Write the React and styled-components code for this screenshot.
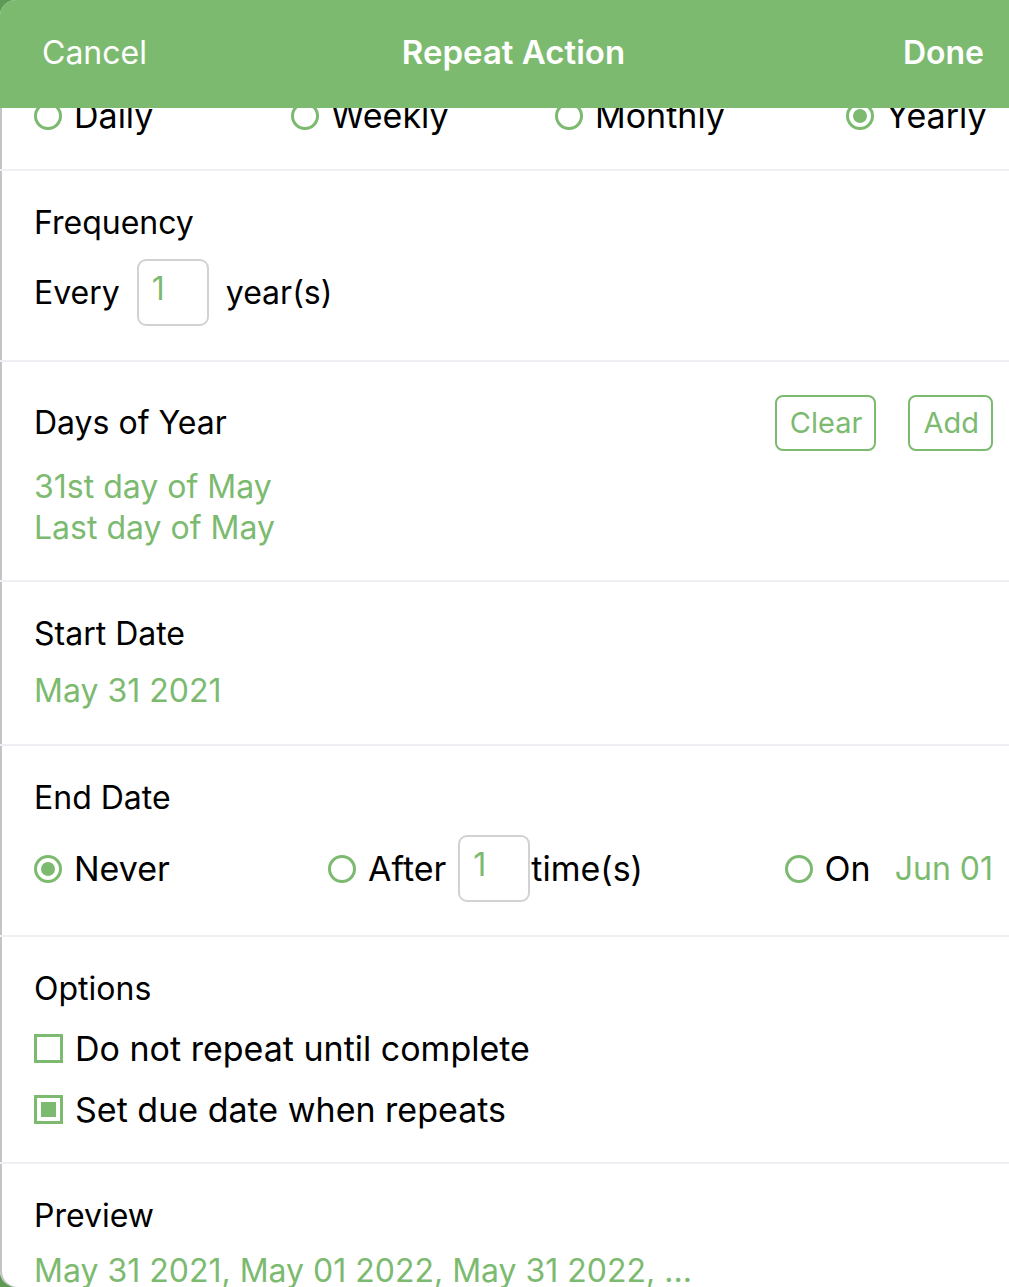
import React from 'react';
import styled, { createGlobalStyle } from 'styled-components';

const green = '#7cba70';

const Global = createGlobalStyle`
  html, body {
    margin: 0;
    padding: 0;
    background: #5e9a54;
  }
  body {
    font-family: Inter, "Noto Sans", "Liberation Sans", sans-serif;
    color: #000;
  }
`;

const Sheet = styled.div`
  position: relative;
  width: 1009px;
  height: 1287px;
  overflow: hidden;
  background: #fff;
  border-top-left-radius: 16px;
  border-bottom-left-radius: 16px;
  box-shadow: inset 2px 0 0 #c4c4c6;
`;

const NavBar = styled.div`
  position: absolute;
  top: 0;
  left: 0;
  right: 0;
  height: 108px;
  z-index: 2;
  background: ${green};
  display: flex;
  align-items: center;
  justify-content: space-between;
  padding: 0 25px 4px 42px;
  box-sizing: border-box;
  color: #fff;
  font-size: 32px;
`;

const NavTitle = styled.div`
  font-weight: 600;
  font-size: 33px;
  position: absolute;
  left: 18px;
  right: 0;
  top: 32px;
  text-align: center;
  pointer-events: none;
`;

const NavButton = styled.div`
  font-weight: ${({ bold }) => (bold ? 600 : 400)};
`;

const Scroll = styled.div`
  padding-top: 95px;
`;

const Section = styled.div`
  padding: ${({ pad }) => pad || '32px 16px 32px 34px'};
  border-bottom: 2px solid #efeff3;
  box-sizing: border-box;
`;

const Title = styled.div`
  font-size: 32px;
  line-height: 40px;
  display: flex;
  align-items: center;
  justify-content: space-between;
`;

const Value = styled.div`
  color: ${green};
  font-size: 32px;
  line-height: 41px;
  margin-top: ${({ top }) => top || 0}px;
  margin-left: ${({ left }) => left || 0}px;
`;

const Row = styled.div`
  display: flex;
  align-items: center;
  margin-top: ${({ top }) => top || 0}px;
  font-size: 32px;
`;

const ChoiceGrid = styled.div`
  display: grid;
  grid-template-columns: ${({ cols }) => cols};
  align-items: center;
  margin-top: ${({ top }) => top || 0}px;
`;

const Group = styled.label`
  display: flex;
  align-items: center;
  gap: 12px;
  font-size: ${({ big }) => (big ? 34 : 32)}px;
  justify-self: ${({ end }) => (end ? 'end' : 'start')};
`;

const Radio = styled.span`
  width: 28px;
  height: 28px;
  box-sizing: border-box;
  border: 3px solid ${green};
  border-radius: 50%;
  display: inline-flex;
  align-items: center;
  justify-content: center;
  &::after {
    content: '';
    width: 14px;
    height: 14px;
    border-radius: 50%;
    background: ${({ on }) => (on ? green : 'transparent')};
  }
`;

const Check = styled.span`
  width: 29px;
  height: 29px;
  box-sizing: border-box;
  border: 3px solid ${green};
  display: inline-flex;
  align-items: center;
  justify-content: center;
  &::after {
    content: '';
    width: 15px;
    height: 15px;
    background: ${({ on }) => (on ? green : 'transparent')};
  }
`;

const NumBox = styled.span`
  width: 72px;
  height: 67px;
  box-sizing: border-box;
  border: 2px solid #d2d2d2;
  border-radius: 9px;
  color: ${green};
  padding: 8px 0 0 13px;
  line-height: 40px;
  font-size: 32px;
  display: inline-block;
  margin: ${({ m }) => m || '0'};
`;

const Tight = styled.span`
  margin-left: -11px;
`;

const Buttons = styled.div`
  display: flex;
  gap: 32px;
  margin-top: 1px;
`;

const OutlineButton = styled.div`
  height: 56px;
  box-sizing: border-box;
  border: 2px solid ${green};
  border-radius: 8px;
  color: ${green};
  padding: 0 12px 0 13px;
  display: flex;
  align-items: center;
  font-size: 29px;
`;

const Options = styled.div`
  display: flex;
  flex-direction: column;
  gap: 20px;
  margin-top: 19px;
`;

export default function App() {
  return (
    <>
      <Global />
      <Sheet>
        <NavBar>
          <NavButton>Cancel</NavButton>
          <NavTitle>Repeat Action</NavTitle>
          <NavButton bold>Done</NavButton>
        </NavBar>
        <Scroll>
          <Section pad="0 28px 33px 34px">
            <ChoiceGrid cols="257px 264px 291px 1fr">
              <Group big><Radio />Daily</Group>
              <Group big><Radio />Weekly</Group>
              <Group big><Radio />Monthly</Group>
              <Group big><Radio on />Yearly</Group>
            </ChoiceGrid>
          </Section>
          <Section pad="32px 16px 34px 34px">
            <Title>Frequency</Title>
            <Row top={16}>
              Every<NumBox m="0 17px 0 17px">1</NumBox>year(s)
            </Row>
          </Section>
          <Section>
            <Title>
              Days of Year
              <Buttons>
                <OutlineButton>Clear</OutlineButton>
                <OutlineButton>Add</OutlineButton>
              </Buttons>
            </Title>
            <Value top={15}>31st day of May</Value>
            <Value>Last day of May</Value>
          </Section>
          <Section pad="32px 16px 33px 34px">
            <Title>Start Date</Title>
            <Value top={16}>May 31 2021</Value>
          </Section>
          <Section pad="32px 16px 33px 34px">
            <Title>End Date</Title>
            <ChoiceGrid cols="294px 456px 1fr" top={17}>
              <Group big><Radio on />Never</Group>
              <Group big>
                <Radio />After
                <NumBox>1</NumBox>
                <Tight>time(s)</Tight>
              </Group>
              <Group big end>
                <Radio />On
                <Value left={12}>Jun 01</Value>
              </Group>
            </ChoiceGrid>
          </Section>
          <Section pad="32px 16px 32px 34px">
            <Title>Options</Title>
            <Options>
              <Group big><Check />Do not repeat until complete</Group>
              <Group big><Check on />Set due date when repeats</Group>
            </Options>
          </Section>
          <Section>
            <Title>Preview</Title>
            <Value top={14}>May 31 2021, May 01 2022, May 31 2022, ...</Value>
          </Section>
        </Scroll>
      </Sheet>
    </>
  );
}
